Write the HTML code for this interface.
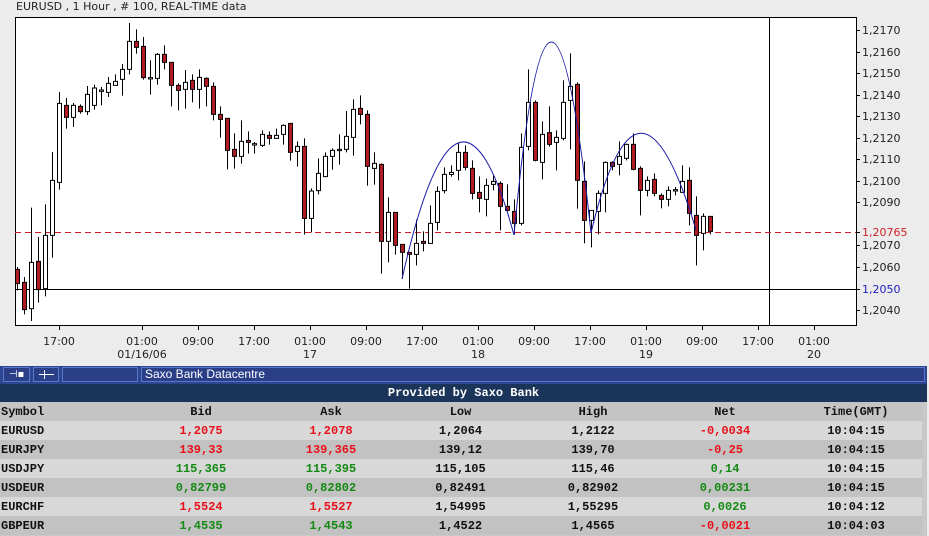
<!DOCTYPE html>
<html><head><meta charset="utf-8"><style>
html,body{margin:0;padding:0;}
body{width:929px;height:536px;overflow:hidden;background:#ececec;position:relative;font-family:"DejaVu Sans","Liberation Sans",sans-serif;}
.t{position:absolute;font-size:11px;color:#222;white-space:nowrap;}
#tb{position:absolute;left:0;top:366px;width:927px;height:18px;background:#2e4592;}
.bt{position:absolute;top:1px;height:15px;border:1px solid #5a78c8;background:#2a3f88;box-sizing:border-box;}
#hd{position:absolute;left:0;top:384px;width:927px;height:18px;background:#1b3459;color:#fff;font:bold 12px "Liberation Mono",monospace;text-align:center;line-height:18px;}
table{position:absolute;left:0;top:402px;width:922px;border-collapse:collapse;table-layout:fixed;font:bold 12px "Liberation Mono",monospace;}
td{height:19px;padding:0;text-align:center;color:#111;}
td:first-child{text-align:left;padding-left:1px;}
tr.h td{background:#c4c4c4;}
tr.a td{background:#d8d8d8;}
tr.b td{background:#c2c2c2;}
.r{color:#e8101a!important}.g{color:#138a13!important}
#bg{position:absolute;left:0;top:402px;width:927px;height:134px;background:#c8c8c8;}
</style></head><body>
<div class="t" style="left:16px;top:0px;">EURUSD , 1 Hour , # 100, REAL-TIME data</div>
<svg width="929" height="366" style="position:absolute;left:0;top:0" xmlns="http://www.w3.org/2000/svg">
<rect x="15.5" y="17.5" width="841" height="308" fill="#fff" stroke="#000"/>
<line x1="769.5" y1="17" x2="769.5" y2="325" stroke="#000"/>
<line x1="15" y1="289.5" x2="856" y2="289.5" stroke="#000"/>
<line x1="15" y1="232.5" x2="856" y2="232.5" stroke="#d0202a" stroke-dasharray="6,4"/>
<g stroke="#000">
<line x1="856" y1="30.5" x2="860" y2="30.5"/><line x1="856" y1="52.5" x2="860" y2="52.5"/><line x1="856" y1="73.5" x2="860" y2="73.5"/><line x1="856" y1="95.5" x2="860" y2="95.5"/><line x1="856" y1="116.5" x2="860" y2="116.5"/><line x1="856" y1="138.5" x2="860" y2="138.5"/><line x1="856" y1="159.5" x2="860" y2="159.5"/><line x1="856" y1="181.5" x2="860" y2="181.5"/><line x1="856" y1="202.5" x2="860" y2="202.5"/><line x1="856" y1="245.5" x2="860" y2="245.5"/><line x1="856" y1="267.5" x2="860" y2="267.5"/><line x1="856" y1="310.5" x2="860" y2="310.5"/><line x1="856" y1="232.5" x2="860" y2="232.5"/><line x1="856" y1="289.5" x2="860" y2="289.5"/>
<line x1="59.5" y1="325" x2="59.5" y2="330"/><line x1="142.5" y1="325" x2="142.5" y2="330"/><line x1="198.5" y1="325" x2="198.5" y2="330"/><line x1="254.5" y1="325" x2="254.5" y2="330"/><line x1="310.5" y1="325" x2="310.5" y2="330"/><line x1="366.5" y1="325" x2="366.5" y2="330"/><line x1="422.5" y1="325" x2="422.5" y2="330"/><line x1="478.5" y1="325" x2="478.5" y2="330"/><line x1="534.5" y1="325" x2="534.5" y2="330"/><line x1="590.5" y1="325" x2="590.5" y2="330"/><line x1="646.5" y1="325" x2="646.5" y2="330"/><line x1="702.5" y1="325" x2="702.5" y2="330"/><line x1="758.5" y1="325" x2="758.5" y2="330"/><line x1="814.5" y1="325" x2="814.5" y2="330"/>
</g>
<g font-family="DejaVu Sans, sans-serif" font-size="11" fill="#222">
<text x="862" y="34">1,2170</text><text x="862" y="56">1,2160</text><text x="862" y="77">1,2150</text><text x="862" y="99">1,2140</text><text x="862" y="120">1,2130</text><text x="862" y="142">1,2120</text><text x="862" y="163">1,2110</text><text x="862" y="185">1,2100</text><text x="862" y="206">1,2090</text><text x="862" y="236" fill="#d0202a">1,20765</text><text x="862" y="249">1,2070</text><text x="862" y="271">1,2060</text><text x="862" y="293" fill="#2020c0">1,2050</text><text x="862" y="314">1,2040</text>
<g text-anchor="middle">
<text x="59" y="345">17:00</text><text x="142" y="345">01:00</text><text x="198" y="345">09:00</text><text x="254" y="345">17:00</text><text x="310" y="345">01:00</text><text x="366" y="345">09:00</text><text x="422" y="345">17:00</text><text x="478" y="345">01:00</text><text x="534" y="345">09:00</text><text x="590" y="345">17:00</text><text x="646" y="345">01:00</text><text x="702" y="345">09:00</text><text x="758" y="345">17:00</text><text x="814" y="345">01:00</text>
<text x="142" y="358">01/16/06</text><text x="310" y="358">17</text><text x="478" y="358">18</text><text x="646" y="358">19</text><text x="814" y="358">20</text>
</g></g>
<g id="c" transform="translate(0,17) scale(1,0.33333)"></g>
<g fill="none" stroke="#1a1aa8" stroke-width="1">
<path d="M402 279 Q458 29 514 235"/>
<path d="M514 235 Q550 -150 591 233"/>
<path d="M591 233 Q638 35 696 230"/>
</g>
</svg>
<script>
var d=[
[17,757,800,750,820,1],[24,796,878,780,892,1],[31,736,875,572,912,0],[38,733,818,660,857,1],[45,655,815,562,838,0],[52,490,655,405,722,0],[59,259,496,225,518,0],[66,265,301,243,335,1],[73,265,301,258,330,0],[80,268,284,262,290,1],[87,232,284,207,294,0],[94,213,265,203,278,0],[101,219,221,210,265,0],[108,199,226,180,240,0],[115,193,205,172,205,0],[122,157,187,141,236,0],[129,73,157,18,172,0],[136,73,91,37,110,1],[143,88,182,60,188,1],[150,182,184,130,233,0],[157,112,184,108,203,0],[164,112,136,85,157,1],[171,136,205,136,268,1],[178,205,220,199,280,1],[185,196,217,159,275,0],[192,190,217,172,256,1],[199,181,217,157,275,0],[206,184,208,181,268,1],[213,208,292,196,310,1],[220,292,307,268,362,1],[227,304,400,304,457,1],[234,397,418,349,455,1],[241,373,418,310,440,0],[248,370,376,343,410,1],
[254,380,382,375,410,0],[262,352,385,340,390,0],[269,355,364,343,383,1],[276,355,364,335,365,0],[283,325,352,322,383,0],[290,319,406,319,431,1],[297,388,403,373,449,0],[304,388,604,364,652,1],[311,522,604,514,646,0],[318,469,521,424,532,0],[325,418,479,406,479,0],[332,400,418,394,458,0],[339,397,399,352,443,0],[346,358,397,282,406,0],[353,277,361,247,416,0],[360,274,292,235,322,1],[367,292,448,280,506,1],[374,439,454,406,503,0],[381,442,673,439,770,1],[388,586,673,541,736,0],[395,586,685,586,713,1],[402,682,706,682,785,1],[409,706,712,706,815,1],[416,679,712,608,745,0],[423,673,679,643,703,1],[430,619,679,565,679,0],[437,523,616,508,640,0],[444,472,521,451,529,0],[451,466,472,445,479,0],[458,406,460,379,490,0],[465,406,451,385,460,1],[472,454,529,430,547,1],[479,526,544,478,586,1],[486,505,547,485,598,0],
[493,493,502,475,520,0],[500,499,568,493,640,1],[507,568,580,502,583,1],[514,583,619,547,652,1],[521,391,619,349,625,0],[528,256,388,157,400,0],[535,256,430,250,433,1],[542,352,436,313,487,0],[549,347,382,268,389,1],[556,361,376,340,460,0],[563,256,364,190,370,0],[570,208,250,109,397,0],[577,202,490,196,575,1],[584,493,610,433,679,1],[591,580,610,580,691,0],[598,529,583,520,652,0],[605,436,529,433,586,0],[612,436,448,433,460,1],[619,418,442,373,475,0],[626,382,424,380,430,0],[633,382,457,349,460,1],[640,454,520,448,595,1],[647,490,520,478,538,0],[654,487,529,469,538,1],[661,535,547,529,574,1],[668,520,547,508,568,0],[675,518,522,510,535,0],[682,493,526,445,526,0],[689,490,589,451,625,1],[696,595,655,538,745,1],[703,598,649,589,700,0],[710,598,643,598,652,1]];
var s='';
d.forEach(function(c){var x=c[0];
s+='<line x1="'+(x+0.5)+'" y1="'+c[3]+'" x2="'+(x+0.5)+'" y2="'+c[4]+'" stroke="#000" vector-effect="non-scaling-stroke"/>';
var h=Math.max(c[2]-c[1],4);
s+='<rect x="'+(x-1.5)+'" y="'+c[1]+'" width="4" height="'+h+'" fill="'+(c[5]?'#b01c22':'#fff')+'" stroke="#000" vector-effect="non-scaling-stroke"/>';});
document.getElementById('c').innerHTML=s;
</script>
<div id="tb">
<div class="bt" style="left:3px;width:27px;color:#fff;font-size:10px;text-align:center;line-height:13px;">⊣▪</div>
<div class="bt" style="left:33px;width:26px;"><div style="position:absolute;left:5px;top:6px;width:15px;height:1px;background:#fff"></div><div style="position:absolute;left:10px;top:2px;width:1px;height:9px;background:#fff"></div></div>
<div class="bt" style="left:62px;width:76px;"></div>
<div class="bt" style="left:141px;width:784px;color:#fff;font:12px 'Liberation Sans',sans-serif;line-height:13px;padding-left:3px;">Saxo Bank Datacentre</div>
</div>
<div id="hd">Provided by Saxo Bank</div>
<div id="bg"></div>
<table>
<colgroup><col style="width:135px"><col style="width:132px"><col style="width:128px"><col style="width:131px"><col style="width:134px"><col style="width:130px"><col style="width:132px"></colgroup>
<tr class="h"><td>Symbol</td><td>Bid</td><td>Ask</td><td>Low</td><td>High</td><td>Net</td><td>Time(GMT)</td></tr>
<tr class="a"><td>EURUSD</td><td class="r">1,2075</td><td class="r">1,2078</td><td>1,2064</td><td>1,2122</td><td class="r">-0,0034</td><td>10:04:15</td></tr>
<tr class="b"><td>EURJPY</td><td class="r">139,33</td><td class="r">139,365</td><td>139,12</td><td>139,70</td><td class="r">-0,25</td><td>10:04:15</td></tr>
<tr class="a"><td>USDJPY</td><td class="g">115,365</td><td class="g">115,395</td><td>115,105</td><td>115,46</td><td class="g">0,14</td><td>10:04:15</td></tr>
<tr class="b"><td>USDEUR</td><td class="g">0,82799</td><td class="g">0,82802</td><td>0,82491</td><td>0,82902</td><td class="g">0,00231</td><td>10:04:15</td></tr>
<tr class="a"><td>EURCHF</td><td class="r">1,5524</td><td class="r">1,5527</td><td>1,54995</td><td>1,55295</td><td class="g">0,0026</td><td>10:04:12</td></tr>
<tr class="b"><td>GBPEUR</td><td class="g">1,4535</td><td class="g">1,4543</td><td>1,4522</td><td>1,4565</td><td class="r">-0,0021</td><td>10:04:03</td></tr>
</table>
</body></html>
